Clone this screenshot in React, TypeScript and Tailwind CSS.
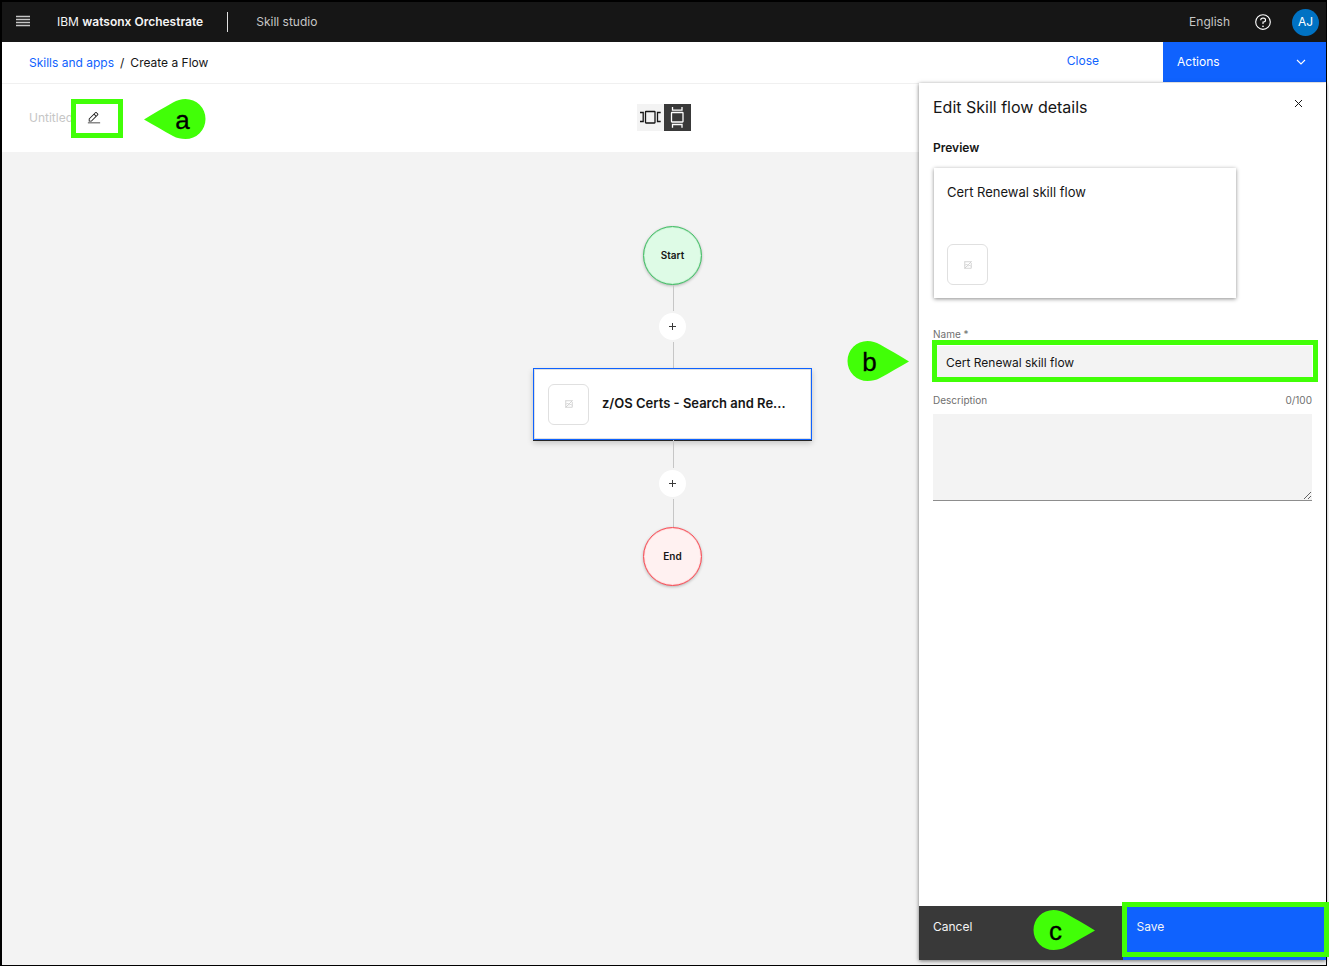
import { useState } from "react";

type CalloutProps = { letter: string; pointing: "left" | "right"; className: string };

function Callout({ letter, pointing, className }: CalloutProps) {
  const left = pointing === "left";
  return (
    <svg width="62" height="40" viewBox="0 0 62 40" className={`pointer-events-none absolute ${className}`}>
      <path
        d="M62 20.500C52 26 43 31.500 33 37C29 39.200 25 40 20.500 40A20 20 0 0 1 20.500 0C25 0 29 1.200 33 3.500C43 9 52 14.500 62 20.500Z"
        fill="#41ff07"
        transform={left ? "matrix(-1 0 0 1 62 0)" : undefined}
      />
      <text
        x={left ? 38.5 : 22.5}
        y="29.5"
        textAnchor="middle"
        fontSize="26"
        stroke="#000"
        strokeWidth="0.3"
        className="font-['Liberation_Sans',sans-serif]"
      >
        {letter}
      </text>
    </svg>
  );
}

function ImagePlaceholder() {
  return (
    <span className="flex size-[41px] shrink-0 items-center justify-center rounded-md border border-[#e0e0e0] bg-white">
      <svg width="8" height="8" viewBox="0 0 16 16" fill="none" stroke="#c6c6c6" strokeWidth="1.500">
        <path d="M1 1.500H15M1.500 1V14.500H14.500V4M1 15L15 1M2 9L5 6L7 8M8 11L11 8L14 11" />
      </svg>
    </span>
  );
}

function AddStep({ lineClass }: { lineClass: string }) {
  return (
    <>
      <span className={`ml-px w-px bg-[#c6c6c6] ${lineClass}`} />
      <button
        type="button"
        aria-label="Add step"
        className="my-[2px] flex size-[27px] items-center justify-center rounded-full bg-white"
      >
        <svg width="9" height="9" viewBox="0 0 9 9" stroke="#393939" strokeWidth="1">
          <path d="M4.500 1V8M1 4.500H8" />
        </svg>
      </button>
      <span className={`ml-px w-px bg-[#c6c6c6] ${lineClass}`} />
    </>
  );
}

function Header() {
  return (
    <header className="flex h-10 items-center bg-[#161616] pr-[7px] pl-3.5 text-xs text-[#c6c6c6]">
      <button type="button" aria-label="Menu" className="pb-0.5">
        <svg width="14" height="12" viewBox="0 0 14 12" stroke="#c6c6c6" strokeWidth="1.300">
          <path d="M0 1.500H14M0 4.500H14M0 7.500H14M0 10.500H14" />
        </svg>
      </button>
      <span className="ml-[27px] text-[#f4f4f4]">
        IBM <b className="font-semibold">watsonx Orchestrate</b>
      </span>
      <span className="ml-6 h-5 w-px bg-[#e0e0e0]" />
      <span className="ml-7">Skill studio</span>
      <span className="ml-auto">English</span>
      <button type="button" aria-label="Help" className="ml-6">
        <svg width="18" height="18" viewBox="0 0 32 32" fill="#fff">
          <path d="M16 2A14 14 0 1 0 30 16 14 14 0 0 0 16 2Zm0 26A12 12 0 1 1 28 16 12 12 0 0 1 16 28Z" />
          <circle cx="16" cy="23.500" r="1.500" />
          <path d="M17 8H15.500A4.490 4.490 0 0 0 11 12.500V13h2v-.5A2.500 2.500 0 0 1 15.500 10H17a2.500 2.500 0 0 1 0 5H15v4.500h2V17a4.500 4.500 0 0 0 0-9Z" />
        </svg>
      </button>
      <button
        type="button"
        aria-label="Account"
        className="ml-5 flex size-[27px] items-center justify-center rounded-full bg-[#0072c3] text-xs text-white"
      >
        AJ
      </button>
    </header>
  );
}

function DetailsPanel() {
  const [name, setName] = useState("Cert Renewal skill flow");
  const [description, setDescription] = useState("");
  return (
    <aside className="absolute -top-px right-0 bottom-[5px] flex w-[407px] flex-col bg-white shadow-[0_1px_4px_rgba(0,0,0,0.55)]">
      <div className="flex flex-1 flex-col px-3.5 pt-3">
        <div className="flex justify-between">
          <h2 className="text-base leading-6">Edit Skill flow details</h2>
          <button type="button" aria-label="Close panel" className="mr-2 flex h-4 w-3 items-center justify-center">
            <svg width="9" height="9" viewBox="0 0 9 9" stroke="#161616" strokeWidth="1">
              <path d="M1 1L8 8M8 1L1 8" />
            </svg>
          </button>
        </div>
        <h3 className="mt-5 text-xs leading-[18px] font-semibold">Preview</h3>
        <div className="mt-[11px] ml-px flex h-[130px] w-[302px] flex-col justify-between px-[13px] pt-3.5 pb-[13px] shadow-[0_1px_4px_rgba(0,0,0,0.45)]">
          <p className="text-[13px] leading-5">{name}</p>
          <ImagePlaceholder />
        </div>
        <label htmlFor="flow-name" className="mt-7 text-[10px] leading-4 text-[#6f6f6f]">
          Name *
        </label>
        <div className="relative mt-1">
          <input
            id="flow-name"
            value={name}
            onChange={(e) => setName(e.target.value)}
            className="block h-8 w-full bg-[#f3f3f3] px-[13px] text-xs outline-none"
          />
          <span className="pointer-events-none absolute -top-1.5 -right-1.5 -bottom-1 -left-px border-5 border-[#41ff07]" />
          <Callout letter="b" pointing="right" className="-top-[5px] -left-[86px]" />
        </div>
        <div className="mt-3.5 flex justify-between text-[10px] leading-4 text-[#6f6f6f]">
          <label htmlFor="flow-description">Description</label>
          <span>{description.length}/100</span>
        </div>
        <textarea
          id="flow-description"
          maxLength={100}
          value={description}
          onChange={(e) => setDescription(e.target.value)}
          className="mt-1.5 block h-[87px] w-full border-b border-[#8d8d8d] bg-[#f3f3f3] px-[13px] py-2 text-xs outline-none"
        />
      </div>
      <div className="flex h-[54px] text-xs text-[#f4f4f4]">
        <div className="relative flex flex-1">
          <button type="button" className="flex-1 bg-[#393939] px-3.5 pb-3 text-left">
            Cancel
          </button>
          <Callout letter="c" pointing="right" className="top-1 right-7" />
        </div>
        <div className="relative flex flex-1">
          <button type="button" className="flex-1 bg-[#0f62fe] px-3.5 pb-3 text-left">
            Save
          </button>
          <span className="pointer-events-none absolute -top-1 -right-[3px] bottom-[3px] -left-px border-5 border-[#41ff07]" />
        </div>
      </div>
    </aside>
  );
}

function FlowCanvas() {
  return (
    <div className="flex flex-1 flex-col items-center bg-[#f3f3f3] pt-[74px] pl-[17px] text-[#161616]">
      <div className="flex size-[59px] items-center justify-center rounded-full border border-[#42be65] bg-[#defbe6] text-[10px] font-semibold shadow-[inset_0_0_1px_#42be65,0_1px_3px_rgba(0,0,0,0.25)]">
        Start
      </div>
      <AddStep lineClass="h-[26px]" />
      <div className="flex h-[72px] w-[279px] items-center gap-[13px] border border-[#0f62fe] bg-white pl-3.5 shadow-[inset_0_0_0_1px_#e0e0e0,0_1px_0_#262626,0_3px_6px_rgba(0,0,0,0.2)]">
        <ImagePlaceholder />
        <span className="text-[13px] font-semibold whitespace-nowrap">z/OS Certs - Search and Re...</span>
      </div>
      <AddStep lineClass="h-7" />
      <div className="flex size-[59px] items-center justify-center rounded-full border border-[#fa4d56] bg-[#fff1f1] text-[10px] font-semibold shadow-[inset_0_0_1px_#fa4d56,0_1px_3px_rgba(0,0,0,0.25)]">
        End
      </div>
    </div>
  );
}

export default function App() {
  return (
    <div className="flex min-h-screen bg-white pr-[2px] font-['Inter',sans-serif] text-[#161616]">
      <div className="flex flex-1 flex-col border-t-2 border-r border-b border-l-2 border-black">
        <Header />
        <div className="flex h-[42px] items-start border-b border-[#f0f0f0] bg-white text-xs">
          <nav className="flex gap-1.5 pt-3 pl-[27px] leading-[18px]">
            <a href="#skills" className="text-[#0f62fe]">
              Skills and apps
            </a>
            <span>/</span>
            <span>Create a Flow</span>
          </nav>
          <button type="button" className="mr-16 ml-auto h-[38px] text-[#0f62fe]">
            Close
          </button>
          <button
            type="button"
            className="flex h-10 w-[163px] items-center justify-between bg-[#0f62fe] pr-5 pl-3.5 text-white"
          >
            Actions
            <svg width="10" height="6" viewBox="0 0 10 6" fill="none" stroke="#fff" strokeWidth="1.100">
              <path d="M1 1L5 5L9 1" />
            </svg>
          </button>
        </div>
        <main className="relative flex flex-1 flex-col">
          <div className="grid h-[68px] grid-cols-[1fr_auto_1fr] items-center bg-white">
            <div className="relative flex items-center pl-[27px]">
              <span className="w-[42px] text-xs whitespace-nowrap text-[#c6c6c6]">Untitled</span>
              <button
                type="button"
                aria-label="Edit name"
                className="relative flex h-[39px] w-[52px] items-center justify-center border-5 border-[#41ff07] bg-white pr-1.5"
              >
                <svg width="14" height="14" viewBox="0 0 32 32" fill="#161616">
                  <path d="M2 26H30V28H2zM25.400 9c.8-.8.8-2 0-2.800l-3.600-3.600c-.8-.8-2-.8-2.800 0l-15 15V24h6.400L25.400 9zM20.400 4L24 7.600l-3 3L17.400 7L20.400 4zM6 22v-3.600l10-10l3.600 3.600l-10 10H6z" />
                </svg>
              </button>
              <Callout letter="a" pointing="left" className="top-0 left-[142px]" />
            </div>
            <div className="flex pb-px">
              <button type="button" aria-label="Horizontal layout" className="bg-[#f3f3f3]">
                <svg width="27" height="27" viewBox="0 0 27 27" fill="none" stroke="#161616" strokeWidth="1.300">
                  <rect x="8.500" y="7.500" width="9.500" height="11.500" rx="0.500" />
                  <path d="M3 8.500H6.200V17.500H3M23.700 8.500H20.500V17.500H23.700" />
                </svg>
              </button>
              <button type="button" aria-label="Vertical layout" className="bg-[#393939]">
                <svg width="27" height="27" viewBox="0 0 27 27" fill="none" stroke="#fff" strokeWidth="1.300">
                  <rect x="7.500" y="8.500" width="11.500" height="9.500" rx="0.500" />
                  <path d="M8.500 3V6.200H18V3M8.500 23.700V20.500H18V23.700" />
                </svg>
              </button>
            </div>
          </div>
          <FlowCanvas />
          <DetailsPanel />
        </main>
      </div>
    </div>
  );
}
